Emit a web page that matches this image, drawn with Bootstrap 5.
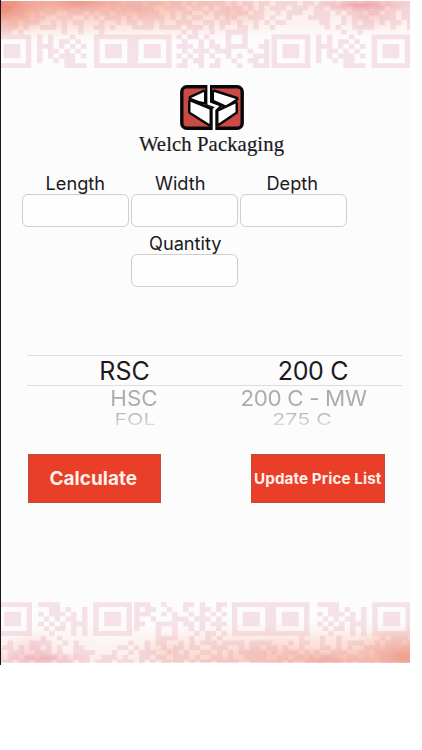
<!DOCTYPE html>
<html lang="en">
<head>
<meta charset="utf-8">
<meta name="viewport" content="width=device-width, initial-scale=1">
<title>Welch Packaging</title>
<link href="https://cdn.jsdelivr.net/npm/bootstrap@5.3.0/dist/css/bootstrap.min.css" rel="stylesheet">
<style>
body{background:#fff;font-family:Inter,"Liberation Sans",sans-serif;color:#1b1a1c}
.app-screen{width:411px;height:665px;border-left:1.5px solid #17151a;background:linear-gradient(#fdfcfd,#fdfcfd) 0 0/100% 663px no-repeat}
.qr-band{display:block;width:409.5px}
.brand-head{width:421px}
.brand-name{font:20.7px/26px "Liberation Serif",serif;letter-spacing:.1px;-webkit-text-stroke:.2px #1b1a1c}
.field-label{display:block;text-align:center;font-size:18.2px;line-height:22px}
.lbl-wid{padding-right:8px}
.lbl-qty{margin-top:5px;padding-left:2px}
.lbl-dep{padding-right:2px}
.field-box.form-control{width:107.5px;height:33px;min-height:0;border:1.5px solid #cfcdcf;border-radius:6px;background:#fefefe}
.fields{margin-left:20.5px;gap:1.5px;margin-top:14.5px}
.picker{margin:68.5px 0 0 26px;width:375px;height:76px}
.pick-line{height:31px;border-top:1px solid #dedcde;border-bottom:1px solid #dedcde}
.pick-cell{white-space:nowrap;line-height:31px;font-size:25px;display:flex;justify-content:center}
.pick-cell span{display:block}
.pick-line .c-a{padding-left:2px}
.pick-line .c-b{padding-left:4px;letter-spacing:-.3px}
.near{height:23px;line-height:23px;color:#adabad;font-size:22.4px}
.near span{transform:scaleY(.97)}
.far{height:20px;line-height:20px;font-size:21.4px}
.far span{transform:scaleY(.74);background:linear-gradient(#b4b2b4,#dedede);-webkit-background-clip:text;color:transparent}
.c-a{width:193px}.c-b{width:182px}
.near.c-a{padding-left:21px}.far.c-a{padding-left:23px}
.near.c-b{padding-right:15px;letter-spacing:-.35px}.far.c-b{padding-right:18px}
.actions{margin:23px 0 0 26.5px;gap:90px}
.btn-flat.btn{width:133.5px;height:49px;border-radius:0;border:1px solid #b9503d;background:#e93e27;color:#fff0eb;font-weight:700;padding:2px 0 0;white-space:nowrap}
.btn.t-calc{font-size:19px;padding-right:2px}.btn.t-upd{font-size:15.2px;letter-spacing:.1px}
</style>
<script src="https://cdn.jsdelivr.net/npm/bootstrap@5.3.0/dist/js/bootstrap.bundle.min.js"></script>
</head>
<body>
<main class="app-screen d-flex flex-column">
  <svg class="qr-band" height="69" viewBox="1.5 0 409.5 69" preserveAspectRatio="none">
    <defs>
      <linearGradient id="wash" x2="0" y2="1"><stop offset="0" stop-color="#f59f82" stop-opacity=".75"/><stop offset=".38" stop-color="#fac4ae" stop-opacity=".48"/><stop offset=".68" stop-color="#fff" stop-opacity="0"/></linearGradient>
      <linearGradient id="sideFade"><stop offset="0" stop-color="#fff"/><stop offset=".48" stop-color="#ccc"/><stop offset=".68" stop-color="#444"/><stop offset="1" stop-color="#555"/></linearGradient>
      <mask id="sideMask"><rect x="-9" width="421" height="69" fill="url(#sideFade)"/></mask>
      <radialGradient id="hot"><stop offset="0" stop-color="#e9643d" stop-opacity=".75"/><stop offset="1" stop-color="#f49b7c" stop-opacity="0"/></radialGradient>
      <radialGradient id="rose"><stop offset="0" stop-color="#e8777b" stop-opacity=".6"/><stop offset="1" stop-color="#f3a5a5" stop-opacity="0"/></radialGradient>
      <clipPath id="topClip"><rect x="0" y="1" width="410.5" height="68"/></clipPath>
    </defs>
    <g clip-path="url(#topClip)">
    <g id="bandWash">
      <rect x="-9" y="1" width="420" height="67" fill="url(#wash)" mask="url(#sideMask)"/>
      <ellipse cx="0" cy="7" rx="60" ry="30" fill="url(#hot)"/>
      <ellipse cx="78" cy="3" rx="60" ry="14" fill="url(#hot)" opacity=".6"/>
      <ellipse cx="135" cy="10" rx="50" ry="16" fill="url(#hot)" opacity=".3"/>
      <ellipse cx="236" cy="13" rx="32" ry="15" fill="url(#hot)" opacity=".28"/>
      <ellipse cx="362" cy="5" rx="50" ry="8" fill="url(#rose)"/>
      <ellipse cx="372" cy="14" rx="32" ry="18" fill="url(#rose)" opacity=".5"/>
    </g>
    <g id="bandCells" fill="#e3a7b8" fill-opacity=".3"></g>
    </g>
  </svg>

  <header class="brand-head d-flex flex-column align-items-center">
    <svg width="64" height="46" viewBox="0 0 64 46" class="mt-3">
      <rect x="1.8" y="1.8" width="60.4" height="41.4" rx="5" fill="#ca4b46" stroke="#090808" stroke-width="3.4"/>
      <g fill="#fff" stroke="#090808" stroke-width="5" stroke-linejoin="round" paint-order="stroke">
        <path d="M11 13 24 7V17L19 16Z"/>
        <path d="M34 7 56 14 46 20.5 34 15Z"/>
        <path d="M10.5 16.8 29.5 24.5V39L10.5 27Z"/>
        <path d="M55.5 18.5V27L38.5 38.5V26.5Z"/>
      </g>
      <path d="M28.7 3V18L37.5 21L34 24.5V43" fill="none" stroke="#090808" stroke-width="6.6"/>
      <path d="M28.7 0V18.5L37 21.5L34 24.5V46" fill="none" stroke="#fff" stroke-width="2.6"/>
    </svg>
    <div class="brand-name">Welch Packaging</div>
  </header>

  <section class="fields d-flex">
    <div><label class="field-label" for="len">Length</label><input id="len" class="form-control field-box"></div>
    <div>
      <label class="field-label lbl-wid" for="wid">Width</label><input id="wid" class="form-control field-box">
      <label class="field-label lbl-qty" for="qty">Quantity</label><input id="qty" class="form-control field-box">
    </div>
    <div><label class="field-label lbl-dep" for="dep">Depth</label><input id="dep" class="form-control field-box"></div>
  </section>

  <section class="picker">
    <div class="pick-line d-flex"><div class="pick-cell c-a"><span>RSC</span></div><div class="pick-cell c-b"><span>200 C</span></div></div>
    <div class="d-flex"><div class="pick-cell near c-a"><span>HSC</span></div><div class="pick-cell near c-b"><span>200 C - MW</span></div></div>
    <div class="d-flex"><div class="pick-cell far c-a"><span>FOL</span></div><div class="pick-cell far c-b"><span>275 C</span></div></div>
  </section>

  <section class="actions d-flex">
    <button class="btn btn-flat t-calc" type="button">Calculate</button>
    <button class="btn btn-flat t-upd" type="button">Update Price List</button>
  </section>

  <svg class="qr-band mt-auto mb-0" height="63" viewBox="1.5 0 409.5 63">
    <clipPath id="footClip"><rect x="0" y="0" width="410.5" height="61"/></clipPath>
    <g clip-path="url(#footClip)"><g transform="translate(404.5 68.2) rotate(180)">
      <use href="#bandWash" y="7" opacity=".75"/><use href="#bandCells"/>
    </g></g>
  </svg>
</main>
<script>
// Paints the decorative code-pattern cells; each block is [left, first row, rows].
const blocks=[
 [-8.96,0,["X.XX.XXX.XX.XXXX.X.","XXX.XX.XXX.X.XX.XXX","XX.XXX..X.XX..XXX.X","X.XX.XX.XX..XXX..X.","XX.XX.XXX..X.X.XX..","X.XXX.X..XXX.X..X..",".XXX.X.......X..X.."]],
 [94,0,["XX.XX.XXX.XXX.XX.X.XXXXX.","X..X.XXXXXX..XXXX.XX.X.XX",".XX.XX..XXXX..X.XX..X.XXX","X.XXX.X.XXXXX.X.X.XX..X.X",".X..X.XX.XX.X..XXX..XX.XX","XX.X...XXXX.XXXX.XXX.X.X.",".X..............X.X......"]],
 [232,0,["X.XX.XX.XXXX.XX.XXX.XXX.XXX.XXXXX","XX.X.X.XXX.XXX.XX.XXX.XXX.XX.XXXX",".XX.XX..X.XXX..XXX.X.XXX.XX.XX.XX","X..XXX.X..X...XXXX..X.XXX..XXX.XX",".X..X.X.XX......XX..X.X.XX.X.XX.X",".XX.X..X.........X.X..XXXX...X..X","....................X..X........."]],
 [37.5,7,["X.X...X...","X.X.XX.X..","XXX.X.X.X.","X.XX.X.X..","X.X.XXX.X.","X..X.XX...",".....XXXX."]],
 [316.5,7,["X.X...X...","X.X.XX.X..","XXX.X.X.X.","X.XX.X.X..","X.X.XXX.X.","X..X.XX...",".....XXXX."]],
 [177,6,["...X..X..XXXX","X.XX.X...X..X",".X..X.X..X..X","XXX.X.XX.XXXX",".X.XXX.XXX...","X.X.X.X..X.X.",".X.XX..X..X..","XX..X.XX...X."]],
 [248,8,["...X","..XX","X..X",".XXX","XX.X",".XXX"]]
];
const g=document.getElementById('bandCells'),cw=5.48,rh=4.78;
let d='';
const box=(x,y,w,h)=>{d+=`M${x} ${y}h${w}v${h}h${-w}Z`};
for(const [x,r0,rows] of blocks)rows.forEach((s,r)=>{
  for(const m of s.matchAll(/X+/g))box(x+m.index*cw,1+(r0+r)*rh,m[0].length*cw,rh+.02);
});
for(const x of [-7,94.5,133.3,272,372]){
  const y=1+7*rh;
  box(x,y,38.8,rh);box(x,y+6*rh,38.8,rh);box(x,y+rh,cw,5*rh);box(x+38.8-cw,y+rh,cw,5*rh);
  box(x+2*cw,y+2*rh,38.8-4*cw,3*rh);
}
const p=document.createElementNS('http://www.w3.org/2000/svg','path');p.setAttribute('d',d);g.append(p);
</script>
</body>
</html>
